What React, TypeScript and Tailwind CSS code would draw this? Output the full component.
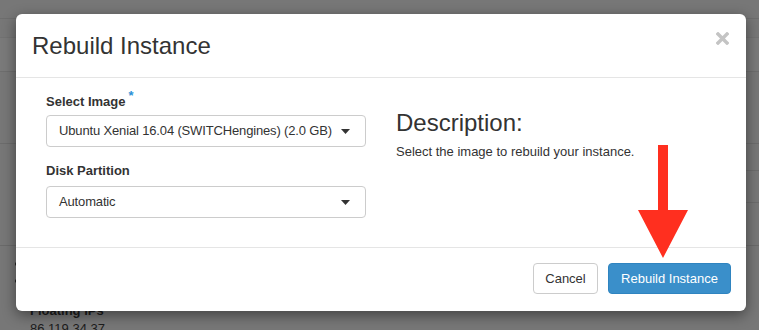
import React from "react";

const Caret = () => (
  <svg width="9" height="5" viewBox="0 0 9 5" className="shrink-0">
    <path d="M0 0 L9 0 L4.5 5 Z" fill="#333" />
  </svg>
);

const SelectBox: React.FC<{ value: string }> = ({ value }) => (
  <div className="flex h-[32px] w-[320px] items-center justify-between rounded-[4px] border border-[#cccccc] bg-white pl-[12px] pr-[15px] text-[13px] text-[#333]">
    <span className="tracking-[-0.15px]">{value}</span>
    <Caret />
  </div>
);

export default function App() {
  return (
    <div className="relative h-[330px] w-[759px] overflow-hidden bg-[#777777] font-['Liberation_Sans',Arial,sans-serif]">
      {/* page behind the backdrop */}
      <div className="flex flex-col">
        <div className="h-[19px] border-b border-[#6e6e6e]" />
        <div className="h-[19px] border-b border-[#727272]" />
        <div className="h-[34px] border-b border-[#6e6e6e] bg-[#7a7a7a]" />
        <div className="h-[72px] border-b border-[#6c6c6c]" />
        <div className="ml-[40px] h-[27px] border-b border-[#6c6c6c]" />
        <div className="ml-[40px] h-[32px] border-b border-[#6c6c6c]" />
        <div className="h-[43px] border-b border-[#6a6a6a]" />
        <ul className="mt-[10px] flex flex-col gap-[1px] pl-[30px] text-[13px] leading-[16px] text-[#1c1c1c]">
          <li className="relative before:absolute before:left-[-15px] before:top-[6px] before:h-[4px] before:w-[4px] before:rounded-full before:bg-[#1c1c1c]">
            &nbsp;
          </li>
          <li className="relative before:absolute before:left-[-15px] before:top-[6px] before:h-[4px] before:w-[4px] before:rounded-full before:bg-[#1c1c1c]">
            &nbsp;
          </li>
        </ul>
        <div className="mt-[14px] pl-[30px] text-[13px] font-bold leading-[16px] text-[#1c1c1c]">
          Floating IPs
        </div>
        <div className="mt-[2px] pl-[30px] text-[13px] leading-[16px] text-[#1c1c1c]">
          86.119.34.37
        </div>
      </div>

      {/* modal */}
      <div className="absolute inset-0 pl-[16px] pt-[14px]">
        <div className="flex h-[297px] w-[730px] flex-col rounded-[6px] bg-white shadow-[0_4px_14px_rgba(0,0,0,0.45)]">
          <div className="flex h-[64px] shrink-0 items-center justify-between border-b border-[#e5e5e5] pl-[16px] pr-[17px]">
            <h3 className="text-[24px] leading-[26px] text-[#333]">Rebuild Instance</h3>
            <svg width="13" height="13" viewBox="0 0 13 13" className="mt-[-14px]">
              <path d="M2 2 L11 11 M11 2 L2 11" stroke="#c4c4c4" strokeWidth="3.4" strokeLinecap="square" />
            </svg>
          </div>

          <div className="flex h-[170px] shrink-0 border-b border-[#e5e5e5] pl-[30px]">
            <div className="flex w-[350px] flex-col pt-[15px]">
              <label className="flex h-[18px] items-start text-[13px] font-bold leading-[18px] text-[#333]">
                Select Image
                <span className="ml-[3px] mt-[-6px] text-[13px] text-[#2a8fd6]">*</span>
              </label>
              <div className="mt-[4px]">
                <SelectBox value="Ubuntu Xenial 16.04 (SWITCHengines) (2.0 GB)" />
              </div>
              <label className="mt-[15px] h-[18px] text-[13px] font-bold leading-[18px] text-[#333]">
                Disk Partition
              </label>
              <div className="mt-[6px]">
                <SelectBox value="Automatic" />
              </div>
            </div>
            <div className="flex flex-col pt-[32px]">
              <h3 className="text-[24px] leading-[26px] text-[#333]">Description:</h3>
              <p className="mt-[7px] text-[13px] leading-[18px] text-[#333]">
                Select the image to rebuild your instance.
              </p>
            </div>
          </div>

          <div className="flex flex-1 items-start justify-end gap-[10px] pr-[15px] pt-[15px]">
            <button className="h-[31px] w-[65px] rounded-[4px] border border-[#cccccc] bg-white text-[13px] text-[#333]">
              Cancel
            </button>
            <button className="h-[31px] w-[123px] rounded-[4px] border border-[#2f84c0] bg-[#3a8fca] text-[13px] text-white">
              Rebuild Instance
            </button>
          </div>
        </div>
      </div>

      {/* red arrow annotation */}
      <svg
        className="absolute left-[638px] top-[145px]"
        width="50"
        height="114"
        viewBox="0 0 50 114"
      >
        <path d="M20 0 H30 V65 H50 L25 113 L0 65 H20 Z" fill="#ff2f1f" />
      </svg>
    </div>
  );
}
